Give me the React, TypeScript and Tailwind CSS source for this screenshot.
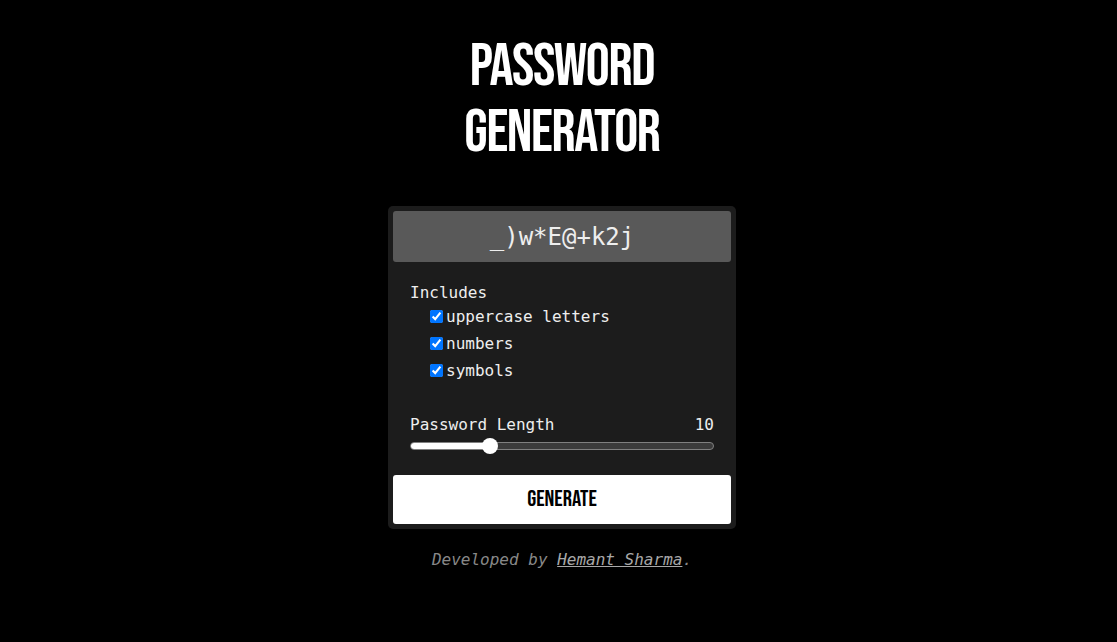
import React, { useState } from 'react';

const mono = "font-['DejaVu_Sans_Mono','Liberation_Mono',monospace]";
const display = "font-['Bebas_Neue','Liberation_Sans',Arial,sans-serif] font-normal uppercase";

const options = [
  { id: 'upper', label: 'uppercase letters' },
  { id: 'numbers', label: 'numbers' },
  { id: 'symbols', label: 'symbols' },
];

const App: React.FC = () => {
  const [length] = useState(10);
  const pct = 25;

  return (
    <div className={`min-h-screen bg-black text-white ${mono} flex flex-col items-center pt-[34px] pl-[7px]`}>
      <h1 className={`${display} text-[60px] leading-[66px] tracking-[-1.4px] text-center`}>
        Password
        <br />
        Generator
      </h1>

      <div className="mt-[40px] w-[348px] bg-[#1c1c1c] rounded-[5px] p-[5px] flex flex-col">
        <div className="h-[51px] bg-[#595959] rounded-[3px] flex items-center justify-center text-[24px] text-[#eeeeee]">
          _)w*E@+k2j
        </div>

        <div className="px-[17px] pt-[19px] pb-[21px] text-[16px]">
          <div className="leading-[24px] text-[#eeeeee]">Includes</div>
          <div className="-mt-[2px] pl-[20px] flex flex-col">
            {options.map((o) => (
              <label key={o.id} className="flex items-center h-[27px] text-[#eeeeee]">
                <input type="checkbox" defaultChecked className="w-[13px] h-[13px] m-0 mr-[3px] accent-[#0075ff]" />
                {o.label}
              </label>
            ))}
          </div>

          <div className="mt-[29px] flex justify-between leading-[24px] text-[#eeeeee]">
            <span>Password Length</span>
            <span>{length}</span>
          </div>
          <div className="relative mt-[1px] h-[16px] flex items-center">
            <div className="w-full h-[8px] rounded-full bg-[#3b3b3b] border border-[#808080] overflow-hidden">
              <div className="h-full bg-white" style={{ width: `${pct}%` }} />
            </div>
            <div
              className="absolute top-0 w-[16px] h-[16px] rounded-full bg-white -translate-x-1/2"
              style={{ left: `calc(8px + ${pct / 100} * (100% - 16px))` }}
            />
          </div>
        </div>

        <button className={`${display} h-[49px] bg-white rounded-[3px] text-black text-[23px] flex items-center justify-center`}>
          Generate
        </button>
      </div>

      <p className="mt-[19px] italic leading-[24px] text-[16px] text-[#888888]">
        Developed by{' '}
        <a href="#" className="underline text-[#a8a8a8]">Hemant Sharma</a>.
      </p>
    </div>
  );
};

export default App;
